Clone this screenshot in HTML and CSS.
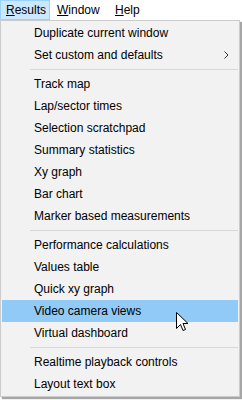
FILE: index.html
```html
<!DOCTYPE html>
<html lang="en">
<head>
    <meta charset="UTF-8">
    <title>Results menu</title>
    <link rel="stylesheet" href="styles.css">
</head>
<body>
    <!-- menu bar -->
    <div class="menubar">
        <div class="bar-item results open"><u>R</u>esults</div>
        <div class="bar-item window"><u>W</u>indow</div>
        <div class="bar-item"><u>H</u>elp</div>
    </div>

    <!-- dropdown -->
    <div class="menu">
        <div class="item">Duplicate current window</div>
        <div class="item">Set custom and defaults
            <svg class="sub-arrow" width="5" height="8" viewBox="0 0 5 8"><polyline points="0.5,0.5 4,4 0.5,7.5" fill="none" stroke="#333" stroke-width="1"/></svg>
        </div>
        <div class="sep"></div>
        <div class="item">Track map</div>
        <div class="item">Lap/sector times</div>
        <div class="item">Selection scratchpad</div>
        <div class="item">Summary statistics</div>
        <div class="item">Xy graph</div>
        <div class="item">Bar chart</div>
        <div class="item">Marker based measurements</div>
        <div class="sep"></div>
        <div class="item">Performance calculations</div>
        <div class="item">Values table</div>
        <div class="item">Quick xy graph</div>
        <div class="item hover">Video camera views
            <svg class="cursor" width="13" height="20" viewBox="0 0 13 20"><path d="M0.5 0.5 L0.5 16.5 L4.5 12.5 L7 18.5 L9.5 17.5 L7 11.5 L12 11.5 Z" fill="#fff" stroke="#000" stroke-width="1" stroke-linejoin="miter"/></svg>
        </div>
        <div class="item">Virtual dashboard</div>
        <div class="sep"></div>
        <div class="item">Realtime playback controls</div>
        <div class="item">Layout text box</div>
    </div>
</body>
</html>
```

FILE: styles.css
```css
* {
    margin: 0;
    padding: 0;
    box-sizing: border-box;
}

body {
    background-color: #fff;
    color: #000;
    font-family: 'Liberation Sans', Arial, sans-serif;
    font-size: 12px;
    width: 242px;
    height: 400px;
    overflow: hidden;
}

.menubar {
    display: flex;
    height: 20px;
    background-color: #fff;
}

.bar-item {
    height: 20px;
    line-height: 18px;
    padding-left: 6px;
    border: 1px solid transparent;
    white-space: nowrap;
}

.bar-item.results {
    width: 50px;
    padding-left: 5px;
}

.bar-item.window {
    width: 58px;
}

.bar-item.open {
    background-color: #cce8ff;
    border-color: #99d1ff;
}

.menu {
    width: 240px;
    background-color: #f2f2f2;
    border: 1px solid #ccc;
    padding: 1px;
    box-shadow: 2px 2px 1px rgba(0, 0, 0, 0.35);
}

.item {
    position: relative;
    height: 22px;
    line-height: 22px;
    padding-left: 32px;
    white-space: nowrap;
}

.item.hover {
    background-color: #91c9f7;
}

.sub-arrow {
    position: absolute;
    right: 9px;
    top: 7px;
}

.cursor {
    position: absolute;
    left: 174px;
    top: 12px;
}

.sep {
    height: 1px;
    background-color: #d7d7d7;
    margin: 3px 0 3px 28px;
}
```
